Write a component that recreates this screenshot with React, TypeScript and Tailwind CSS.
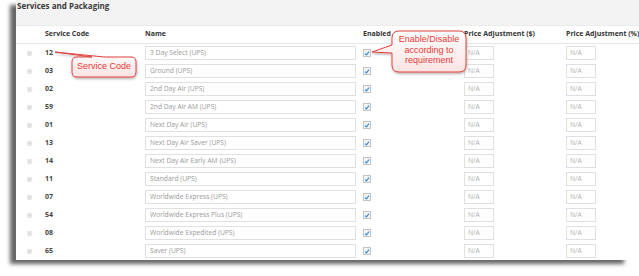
import React from "react";

type Service = { code: string; name: string };

const services: Service[] = [
  { code: "12", name: "3 Day Select (UPS)" },
  { code: "03", name: "Ground (UPS)" },
  { code: "02", name: "2nd Day Air (UPS)" },
  { code: "59", name: "2nd Day Air AM (UPS)" },
  { code: "01", name: "Next Day Air (UPS)" },
  { code: "13", name: "Next Day Air Saver (UPS)" },
  { code: "14", name: "Next Day Air Early AM (UPS)" },
  { code: "11", name: "Standard (UPS)" },
  { code: "07", name: "Worldwide Express (UPS)" },
  { code: "54", name: "Worldwide Express Plus (UPS)" },
  { code: "08", name: "Worldwide Expedited (UPS)" },
  { code: "65", name: "Saver (UPS)" },
];

const cols = "grid grid-cols-[29px_100px_218px_101px_102px_1fr] items-center";

function Grip() {
  return (
    <svg width="5" height="5" viewBox="0 0 5 5" className="ml-[11px]">
      <rect x="0" y="0" width="5" height="5" fill="#f1f1f1" />
      <path d="M0.5 1h4M0.5 2.5h4M0.5 4h4" stroke="#d6d6d6" strokeWidth="0.8" />
    </svg>
  );
}

function Check() {
  return (
    <div className="flex h-[8px] w-[8px] items-center justify-center border border-[#c4c4c4] bg-[#f4f4f4]">
      <svg width="7" height="7" viewBox="0 0 7 7">
        <path d="M1.2 3.6 L2.8 5.2 L5.9 1.4" fill="none" stroke="#2f86d6" strokeWidth="1.3" />
      </svg>
    </div>
  );
}

function Callouts() {
  return (
    <svg className="pointer-events-none absolute inset-0" width="639" height="276">
      <defs>
        <linearGradient id="cf" x1="0" y1="0" x2="0" y2="1">
          <stop offset="0" stopColor="#ffffff" />
          <stop offset="1" stopColor="#fbe3e3" />
        </linearGradient>
        <filter id="ds" x="-20%" y="-20%" width="140%" height="150%">
          <feDropShadow dx="0.5" dy="1.5" stdDeviation="1" floodColor="#000" floodOpacity="0.3" />
        </filter>
      </defs>
      <path
        d="M77 57 L92 57 L55 52 L104 57 L131 57 Q136 57 136 62 L136 72 Q136 77 131 77 L77 77 Q72 77 72 72 L72 62 Q72 57 77 57 Z"
        fill="url(#cf)"
        stroke="#e2413f"
        strokeWidth="1"
        filter="url(#ds)"
      />
      <path
        d="M399 31 L459 31 Q466 31 466 38 L466 65 Q466 72 459 72 L399 72 Q392 72 392 65 L392 53 L372 52 L392 45 L392 38 Q392 31 399 31 Z"
        fill="url(#cf)"
        stroke="#e2413f"
        strokeWidth="1"
        filter="url(#ds)"
      />
    </svg>
  );
}

export default function App() {
  return (
    <div className="relative h-[276px] w-[639px] overflow-hidden bg-white font-['Open_Sans',sans-serif]">
      <div className="ml-[16px] h-[259px] w-[614px] bg-white shadow-[-6px_5px_4px_rgba(0,0,0,0.6)]">
        <div className="h-[26px] w-[623px] border-b border-[#ececec] bg-[#f3f3f3] pl-[1px]">
          <h2 className="text-[8px] font-bold leading-[12px] text-[#3a3a3a]">Services and Packaging</h2>
        </div>
        <div className="w-[623px] bg-white">
          <div className={`${cols} h-[18px] border-b border-[#e6e6e6] text-[7px] font-bold text-[#333]`}>
            <span />
            <span>Service Code</span>
            <span>Name</span>
            <span>Enabled</span>
            <span className="whitespace-nowrap">Price Adjustment ($)</span>
            <span className="whitespace-nowrap">Price Adjustment (%)</span>
          </div>
          {services.map((s) => (
            <div key={s.code} className={`${cols} h-[18px]`}>
              <Grip />
              <span className="text-[7px] font-bold text-[#444]">{s.code}</span>
              <div className="flex h-[14px] w-[211px] items-center border border-[#e0e0e0] pl-[4px] text-[6.7px] text-[#9a9a9a]">
                {s.name}
              </div>
              <Check />
              <div className="flex h-[14px] w-[30px] items-center border border-[#e0e0e0] pl-[3px] text-[6.7px] text-[#b0b0b0]">
                N/A
              </div>
              <div className="flex h-[14px] w-[30px] items-center border border-[#e0e0e0] pl-[3px] text-[6.7px] text-[#b0b0b0]">
                N/A
              </div>
            </div>
          ))}
        </div>
      </div>

      <Callouts />
      <div className="absolute left-[72px] top-[57px] flex h-[20px] w-[64px] items-center justify-center font-['Liberation_Sans',Arial,sans-serif] text-[9px] text-[#e53935]">
        Service Code
      </div>
      <div className="absolute left-[392px] top-[34px] w-[74px] text-center font-['Liberation_Sans',Arial,sans-serif] text-[9px] leading-[10.5px] text-[#e53935]">
        Enable/Disable
        <br />
        according to
        <br />
        requirement
      </div>
    </div>
  );
}
